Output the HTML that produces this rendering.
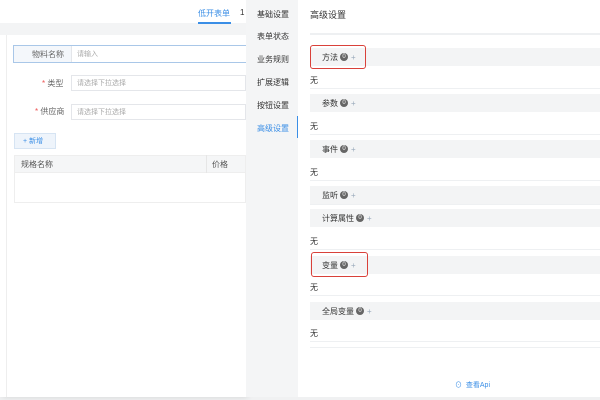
<!DOCTYPE html>
<html><head><meta charset="utf-8"><style>
*{margin:0;padding:0;box-sizing:border-box}
body{width:600px;height:400px;overflow:hidden;background:#f0f1f2;font-family:"Liberation Sans","Noto Sans CJK SC",sans-serif;font-size:8px;color:#333;position:relative}
.a{position:absolute}
.left{left:0;top:0;width:246px;height:397px;background:#fff;box-shadow:2px 0 6px rgba(0,0,0,.12)}
.side{left:246px;top:0;width:52px;height:397px;background:#f4f5f6}
.right{left:298px;top:0;width:302px;height:397px;background:#fff}
.inp{background:#fff;border:1px solid #e4e6ea;height:16px;color:#aaa;font-size:7px;display:flex;align-items:center;padding-left:5px}
.hd{left:12px;width:290px;height:18px;background:#f3f4f5;padding-left:12px;display:flex;align-items:center;font-size:8px;color:#333}
.b{display:flex;align-items:center;justify-content:center;width:8px;height:8px;border-radius:50%;background:#666;color:#fff;font-size:6px;margin-left:2px}
.p{color:#9ab;margin-left:3px}
.w{left:12px;font-size:8px}
.ln{left:12px;width:290px;height:1px;background:#eef0f2}
.red{border:1.5px solid #d9413a;border-radius:3px}
.si{left:11px;font-size:8px;color:#333}
</style></head><body>
<div class="a left">
 <div class="a" style="left:0;top:23px;width:246px;height:12px;background:#f3f4f5"></div>
 <div class="a" style="left:198px;top:8px;color:#3a8ee6;font-size:8px">低开表单</div>
 <div class="a" style="left:198px;top:22px;width:33px;height:1.5px;background:#3a8ee6"></div>
 <div class="a" style="left:240px;top:8px;font-size:8px">1</div>
 <div class="a" style="left:6px;top:35px;width:240px;height:362px;border-left:1px solid #eee"></div>
 <div class="a" style="left:13px;top:45px;width:233px;height:18px;border:1px solid #a9c7e8;background:#f4f7fb"></div>
 <div class="a" style="left:32px;top:49px;color:#666">物料名称</div>
 <div class="a inp" style="left:71px;top:46px;width:175px;border:none;border-left:1px solid #e4e6ea">请输入</div>
 <div class="a" style="left:42px;top:78px;color:#666"><span style="color:#e55">*</span> 类型</div>
 <div class="a inp" style="left:71px;top:75px;width:175px">请选择下拉选择</div>
 <div class="a" style="left:35px;top:106px;color:#666"><span style="color:#e55">*</span> 供应商</div>
 <div class="a inp" style="left:71px;top:104px;width:175px">请选择下拉选择</div>
 <div class="a" style="left:14px;top:133px;width:42px;height:16px;background:#eef4fb;border:1px solid #d6e4f3;color:#3a8ee6;font-size:7px;display:flex;align-items:center;padding-left:8px">+ 新增</div>
 <div class="a" style="left:14px;top:155px;width:232px;height:18px;background:#f5f6f7;border:1px solid #eee"></div>
 <div class="a" style="left:21px;top:159px;color:#555">规格名称</div>
 <div class="a" style="left:212px;top:159px;color:#555">价格</div>
 <div class="a" style="left:206px;top:155px;width:1px;height:18px;background:#e6e6e6"></div>
 <div class="a" style="left:14px;top:173px;width:232px;height:30px;border:1px solid #eee;border-top:none"></div>
</div>
<div class="a side">
 <div class="a si" style="top:9px">基础设置</div>
 <div class="a si" style="top:31px">表单状态</div>
 <div class="a si" style="top:54px">业务规则</div>
 <div class="a si" style="top:77px">扩展逻辑</div>
 <div class="a si" style="top:100px">按钮设置</div>
 <div class="a si" style="top:123px;color:#3a8ee6">高级设置</div>
 <div class="a" style="left:51px;top:116px;width:1.5px;height:22px;background:#3a8ee6"></div>
</div>
<div class="a right">
 <div class="a" style="left:12px;top:8px;font-size:9px;color:#333">高级设置</div>
 <div class="a ln" style="top:33px;height:2px"></div>
 <div class="a hd" style="top:48px">方法<span class="b">0</span><span class="p">+</span></div>
 <div class="a w" style="top:75px">无</div><div class="a ln" style="top:88px"></div>
 <div class="a hd" style="top:94px">参数<span class="b">0</span><span class="p">+</span></div>
 <div class="a w" style="top:121px">无</div><div class="a ln" style="top:134px"></div>
 <div class="a hd" style="top:140px">事件<span class="b">0</span><span class="p">+</span></div>
 <div class="a w" style="top:167px">无</div><div class="a ln" style="top:180px"></div>
 <div class="a hd" style="top:186px">监听<span class="b">0</span><span class="p">+</span></div>
 <div class="a ln" style="top:204px"></div>
 <div class="a hd" style="top:209px">计算属性<span class="b">0</span><span class="p">+</span></div>
 <div class="a w" style="top:236px">无</div><div class="a ln" style="top:249px"></div>
 <div class="a hd" style="top:256px">变量<span class="b">0</span><span class="p">+</span></div>
 <div class="a w" style="top:282px">无</div><div class="a ln" style="top:295px"></div>
 <div class="a hd" style="top:302px">全局变量<span class="b">0</span><span class="p">+</span></div>
 <div class="a w" style="top:328px">无</div><div class="a ln" style="top:341px"></div>
 <div class="a ln" style="top:347px"></div>
 <div class="a red" style="left:12px;top:45px;width:56px;height:24px"></div>
 <div class="a red" style="left:13px;top:252px;width:57px;height:25px"></div>
 <div class="a" style="left:157px;top:380px;color:#3a8ee6;font-size:7px">⊙&nbsp; 查看Api</div>
</div>
</body></html>
